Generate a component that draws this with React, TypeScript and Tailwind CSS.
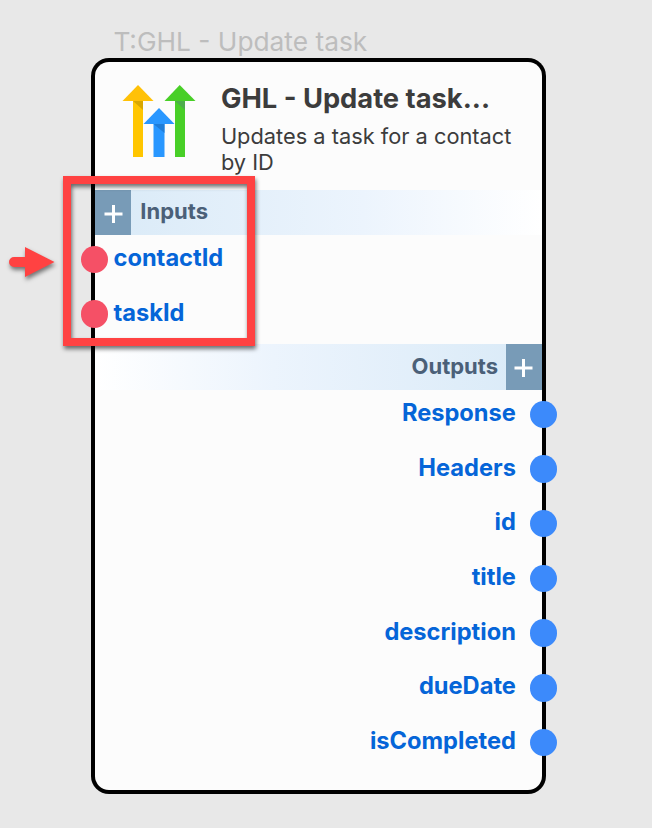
const inputs = ["contactId", "taskId"];
const outputs = ["Response", "Headers", "id", "title", "description", "dueDate", "isCompleted"];

function Plus() {
  return (
    <div className="flex h-full w-[36.300px] shrink-0 items-center justify-center bg-[#789bb7] pt-[2.500px]">
      <svg width="19" height="18" viewBox="0 0 19 18" stroke="#fff" strokeWidth="3">
        <path d="M9.500 0V18M0.500 9H18.500" />
      </svg>
    </div>
  );
}

function Logo() {
  return (
    <svg className="mt-[23px] ml-[27px] shrink-0" width="74" height="73" viewBox="-0.500 0 74 73">
      <path d="M10.500 16H20.500V72H10.500Z" fill="#ffc600" />
      <path d="M10.500 16H20.500V25Z" fill="#d8a700" />
      <path d="M0 16L15.500 0L31 16Z" fill="#ffc107" />
      <path d="M52.500 16H62.500V72H52.500Z" fill="#48cf27" />
      <path d="M52.500 16H62.500V25Z" fill="#4dad4c" />
      <path d="M42 16L57.200 0L73 16Z" fill="#48cf27" />
      <path d="M31 39H42V72H31Z" fill="#2997ff" />
      <path d="M31 39H42V48Z" fill="#1f7dd8" />
      <path d="M21 39L36.500 23L52 39Z" fill="#2997ff" />
    </svg>
  );
}

export default function App() {
  return (
    <div className="relative h-[828px] w-[652px] overflow-hidden bg-[#e8e8e8] font-['Inter',sans-serif] pt-[26px]">
      <div className="ml-[113.4px] h-[32px] text-[26.3px] leading-[32px] whitespace-nowrap text-[#bdbdbd]">T:GHL - Update task</div>
      <div className="ml-[91px] h-[736px] w-[455px] rounded-[18px] bg-black p-[4px]">
        <div className="h-full w-full rounded-[14px] bg-[#fcfcfc]">
          <div className="flex h-[127.500px]">
            <Logo />
            <div className="ml-[24.900px] pt-[20px] text-[#3c3c3c]">
              <div className="text-[27.300px] leading-[34px] font-bold whitespace-nowrap">GHL - Update task...</div>
              <div className="mt-[7px] w-[310px] text-[21.800px] leading-[26px]">Updates a task for a contact<br />by ID</div>
            </div>
          </div>
          <div className="flex h-[45.500px] items-center bg-linear-to-r from-[#d9eaf7] via-[#ecf4fd] via-60% to-white">
            <Plus />
            <span className="-mt-[2px] ml-[9px] text-[22px] leading-[28px] font-bold text-[#4b6078]">Inputs</span>
          </div>
          {inputs.map((name) => (
            <div key={name} className="flex h-[54.700px] items-start pt-[10.800px]">
              <div className="-ml-[14px] size-[27.400px] shrink-0 rounded-full bg-[#f55066]" />
              <span className="ml-[5.100px] pt-[0.500px] text-[23.650px] leading-[24px] font-bold text-[#0565d8]">{name}</span>
            </div>
          ))}
          <div className="flex h-[45.500px] items-center justify-end bg-linear-to-l from-[#d9eaf7] via-[#ecf4fd] via-60% to-white">
            <span className="-mt-[2px] mr-[7.700px] text-[22px] leading-[28px] font-bold text-[#4b6078]">Outputs</span>
            <Plus />
          </div>
          {outputs.map((name) => (
            <div key={name} className="flex h-[54.700px] items-start justify-end pt-[10.800px]">
              <span className="mr-[13.800px] pt-[0.200px] text-[23.650px] leading-[24px] font-bold text-[#0565d8]">{name}</span>
              <div className="-mr-[15.100px] size-[27.400px] shrink-0 rounded-full bg-[#3c8afb]" />
            </div>
          ))}
        </div>
      </div>
      <div className="absolute top-[176px] left-[63px] h-[170px] w-[192px] border-8 border-[#ff4242] drop-shadow-[1px_3px_2px_rgba(0,0,0,0.55)]" />
      <svg className="absolute top-[245px] left-[7px] drop-shadow-[1px_3px_2px_rgba(0,0,0,0.5)]" width="50" height="34" viewBox="0 0 50 34">
        <path d="M7 12H18V2L47.500 17L18 32V22H7A5 5 0 0 1 7 12Z" fill="#ff4242" />
      </svg>
    </div>
  );
}
